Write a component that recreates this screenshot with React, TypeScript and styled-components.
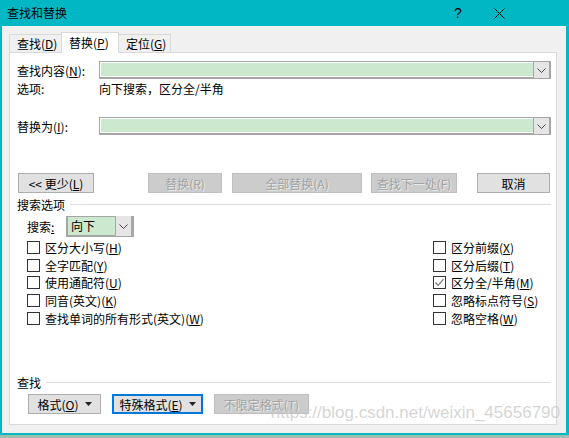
import * as React from 'react';
import styled, { createGlobalStyle, css } from 'styled-components';

const GlobalStyle = createGlobalStyle`
  * { box-sizing: border-box; }
  html, body { margin: 0; padding: 0; background: #9cbfae; }
  body {
    font-family: "Noto Sans CJK SC", "Liberation Sans", sans-serif;
    font-size: 12px;
    color: #000;
  }
`;

const Window = styled.div`
  position: relative;
  width: 569px;
  height: 435px;
  display: flex;
  flex-direction: column;
  background: #f0f0f0;
  border-left: 2px solid #00b7c3;
  border-right: 3px solid #00b7c3;
  border-bottom: 2px solid #00b7c3;
`;

const TitleBar = styled.div`
  height: 26px;
  margin: 0 -3px 0 -2px;
  padding: 0 47px 0 7px;
  background: #00b7c3;
  display: flex;
  align-items: center;
  flex-shrink: 0;
`;

const Title = styled.div`
  flex: 1;
  font-size: 12px;
  line-height: 26px;
`;

const TitleButton = styled.div<{ $w: number }>`
  width: ${p => p.$w}px;
  height: 26px;
  display: flex;
  align-items: center;
  justify-content: center;
  font-family: "Liberation Sans", sans-serif;
  font-size: 14px;
`;

const Body = styled.div`
  flex: 1;
  display: flex;
  flex-direction: column;
  padding: 6px 9px 8px 7px;
`;

const Tabs = styled.div`
  display: flex;
  align-items: flex-end;
  height: 20px;
  padding-left: 1px;
  position: relative;
  z-index: 1;
`;

const Tab = styled.div<{ $active?: boolean; $w: number }>`
  width: ${p => p.$w}px;
  height: 18px;
  border: 1px solid #d9d9d9;
  border-bottom: none;
  background: #f0f0f0;
  display: flex;
  align-items: center;
  padding-left: 7px;
  font-size: 12px;
  margin-left: -1px;
  ${p =>
    p.$active &&
    css`
      height: 21px;
      margin-bottom: -1px;
      background: #fff;
      padding-bottom: 1px;
    `}
`;

const Key = styled.span`
  text-decoration: underline;
  text-underline-offset: 1px;
`;

const Panel = styled.div`
  flex: 1;
  background: #fff;
  border: 1px solid #d9d9d9;
  display: flex;
  flex-direction: column;
  padding: 8px 5px 10px 7px;
`;

const FieldRow = styled.div<{ $mt: number }>`
  display: flex;
  align-items: center;
  height: 18px;
  margin-top: ${p => p.$mt}px;
`;

const Label = styled.div`
  width: 82px;
  flex-shrink: 0;
`;

const Combo = styled.div`
  flex: 1;
  height: 18px;
  display: flex;
  border: 1px solid #a6a6a6;
  border-bottom-width: 2px;
  background: #fff;
  padding: 1px 0 0 1px;
`;

const ComboField = styled.div<{ $w?: number }>`
  ${p => (p.$w ? `width: ${p.$w}px;` : 'flex: 1;')}
  background: #cce8cf;
  display: flex;
  align-items: center;
  padding-left: 3px;
  margin-bottom: 1px;
`;

const ComboArrow = styled.div`
  width: 17px;
  margin-top: -1px;
  margin-bottom: -1px;
  background: #e5e5e5;
  border-left: 1px solid #a6a6a6;
  border-right: 1px solid #a6a6a6;
  display: flex;
  align-items: center;
  justify-content: center;
`;

const InfoRow = styled.div`
  display: flex;
  height: 16px;
  align-items: center;
  margin-top: 1px;
`;

const ButtonRow = styled.div<{ $mt: number; $indent?: number }>`
  display: flex;
  margin-top: ${p => p.$mt}px;
  padding-left: ${p => p.$indent ?? 0}px;
`;

const Button = styled.div<{ $w: number; $ml?: number; $disabled?: boolean; $focus?: boolean }>`
  width: ${p => p.$w}px;
  height: 20px;
  margin-left: ${p => p.$ml ?? 0}px;
  background: #e1e1e1;
  border: 1px solid #adadad;
  display: flex;
  align-items: center;
  justify-content: center;
  gap: 6px;
  font-size: 12px;
  ${p =>
    p.$disabled &&
    css`
      background: #cccccc;
      border-color: #bfbfbf;
      color: #a3a3a3;
      text-shadow: 1px 1px 0 #eaeaea;
    `}
  ${p =>
    p.$focus &&
    css`
      border: 2px solid #0078d7;
    `}
`;

const GroupHeader = styled.div<{ $mt: number }>`
  display: flex;
  align-items: center;
  gap: 5px;
  height: 14px;
  margin-top: ${p => p.$mt}px;
  &::after {
    content: '';
    flex: 1;
    height: 1px;
    background: #dcdcdc;
  }
`;

const SearchRow = styled.div`
  display: flex;
  align-items: center;
  margin-top: 5px;
  padding-left: 10px;
  height: 21px;
`;

const SearchLabel = styled.div`
  width: 39px;
`;

const Select = styled.div`
  width: 68px;
  height: 21px;
  display: flex;
  border: 2px solid #a6a6a6;
  border-top-width: 1px;
  background: #cce8cf;
`;

const OptionsGrid = styled.div`
  display: grid;
  grid-template-columns: 406px 1fr;
  grid-auto-flow: column;
  grid-template-rows: repeat(5, 17.6px);
  margin-top: 2px;
  padding-left: 10px;
`;

const Option = styled.div`
  display: flex;
  align-items: center;
  gap: 5px;
`;

const Box = styled.div`
  width: 13px;
  height: 13px;
  border: 1px solid #333;
  background: #fff;
  display: flex;
  align-items: center;
  justify-content: center;
`;

const Spacer = styled.div`
  flex: 1;
`;

const Watermark = styled.div`
  position: absolute;
  right: 6px;
  top: 403px;
  font-family: "Liberation Sans", sans-serif;
  font-size: 17px;
  color: rgba(195, 195, 195, 0.7);
  pointer-events: none;
`;

const Chevron = () => (
  <svg width="9" height="5" viewBox="0 0 9 5">
    <path d="M0.5 0.5 L4.5 4.5 L8.5 0.5" fill="none" stroke="#444" strokeWidth="1" />
  </svg>
);

const Caret = () => (
  <svg width="7" height="4" viewBox="0 0 7 4">
    <path d="M0 0 H7 L3.5 4 Z" fill="#222" />
  </svg>
);

const Check = () => (
  <svg width="11" height="11" viewBox="0 0 11 11">
    <path d="M1.5 5.5 L4.2 8.3 L9.5 2.2" fill="none" stroke="#777" strokeWidth="1.2" />
  </svg>
);

const Acc: React.FC<{ text: string; k: string }> = ({ text, k }) => (
  <span>
    {text}(<Key>{k}</Key>)
  </span>
);

const leftOptions: [string, string][] = [
  ['区分大小写', 'H'],
  ['全字匹配', 'Y'],
  ['使用通配符', 'U'],
  ['同音(英文)', 'K'],
  ['查找单词的所有形式(英文)', 'W'],
];

const rightOptions: [string, string, boolean][] = [
  ['区分前缀', 'X', false],
  ['区分后缀', 'T', false],
  ['区分全/半角', 'M', true],
  ['忽略标点符号', 'S', false],
  ['忽略空格', 'W', false],
];

export default function App() {
  return (
    <>
      <GlobalStyle />
      <Window>
        <TitleBar>
          <Title>查找和替换</Title>
          <TitleButton $w={36}>?</TitleButton>
          <TitleButton $w={46}>
            <svg width="11" height="11" viewBox="0 0 11 11">
              <path d="M0.5 0.5 L10.5 10.5 M10.5 0.5 L0.5 10.5" stroke="#000" strokeWidth="1" />
            </svg>
          </TitleButton>
        </TitleBar>
        <Body>
          <Tabs>
            <Tab $w={53}>
              <Acc text="查找" k="D" />
            </Tab>
            <Tab $w={58} $active>
              <Acc text="替换" k="P" />
            </Tab>
            <Tab $w={53}>
              <Acc text="定位" k="G" />
            </Tab>
          </Tabs>
          <Panel>
            <FieldRow $mt={0}>
              <Label>
                <Acc text="查找内容" k="N" />:
              </Label>
              <Combo>
                <ComboField />
                <ComboArrow>
                  <Chevron />
                </ComboArrow>
              </Combo>
            </FieldRow>
            <InfoRow>
              <Label>选项:</Label>
              <span>向下搜索，区分全/半角</span>
            </InfoRow>
            <FieldRow $mt={21}>
              <Label>
                <Acc text="替换为" k="I" />:
              </Label>
              <Combo>
                <ComboField />
                <ComboArrow>
                  <Chevron />
                </ComboArrow>
              </Combo>
            </FieldRow>
            <ButtonRow $mt={38} $indent={1}>
              <Button $w={76}>
                <span>
                  &lt;&lt; 更少(<Key>L</Key>)
                </span>
              </Button>
              <Button $w={74} $ml={54} $disabled>
                替换(R)
              </Button>
              <Button $w={130} $ml={10} $disabled>
                全部替换(A)
              </Button>
              <Button $w={86} $ml={9} $disabled>
                查找下一处(F)
              </Button>
              <Button $w={73} $ml={20}>
                取消
              </Button>
            </ButtonRow>
            <GroupHeader $mt={4}>搜索选项</GroupHeader>
            <SearchRow>
              <SearchLabel>
                搜索<Key>:</Key>
              </SearchLabel>
              <Select>
                <ComboField $w={49}>向下</ComboField>
                <ComboArrow>
                  <Chevron />
                </ComboArrow>
              </Select>
            </SearchRow>
            <OptionsGrid>
              {leftOptions.map(([t, k]) => (
                <Option key={t}>
                  <Box />
                  <Acc text={t} k={k} />
                </Option>
              ))}
              {rightOptions.map(([t, k, on]) => (
                <Option key={t}>
                  <Box>{on && <Check />}</Box>
                  <Acc text={t} k={k} />
                </Option>
              ))}
            </OptionsGrid>
            <Spacer />
            <GroupHeader $mt={0}>查找</GroupHeader>
            <ButtonRow $mt={5} $indent={11}>
              <Button $w={73}>
                <Acc text="格式" k="O" />
                <Caret />
              </Button>
              <Button $w={91} $ml={11} $focus>
                <Acc text="特殊格式" k="E" />
                <Caret />
              </Button>
              <Button $w={95} $ml={11} $disabled>
                不限定格式(T)
              </Button>
            </ButtonRow>
          </Panel>
        </Body>
        <Watermark>https://blog.csdn.net/weixin_45656790</Watermark>
      </Window>
    </>
  );
}
